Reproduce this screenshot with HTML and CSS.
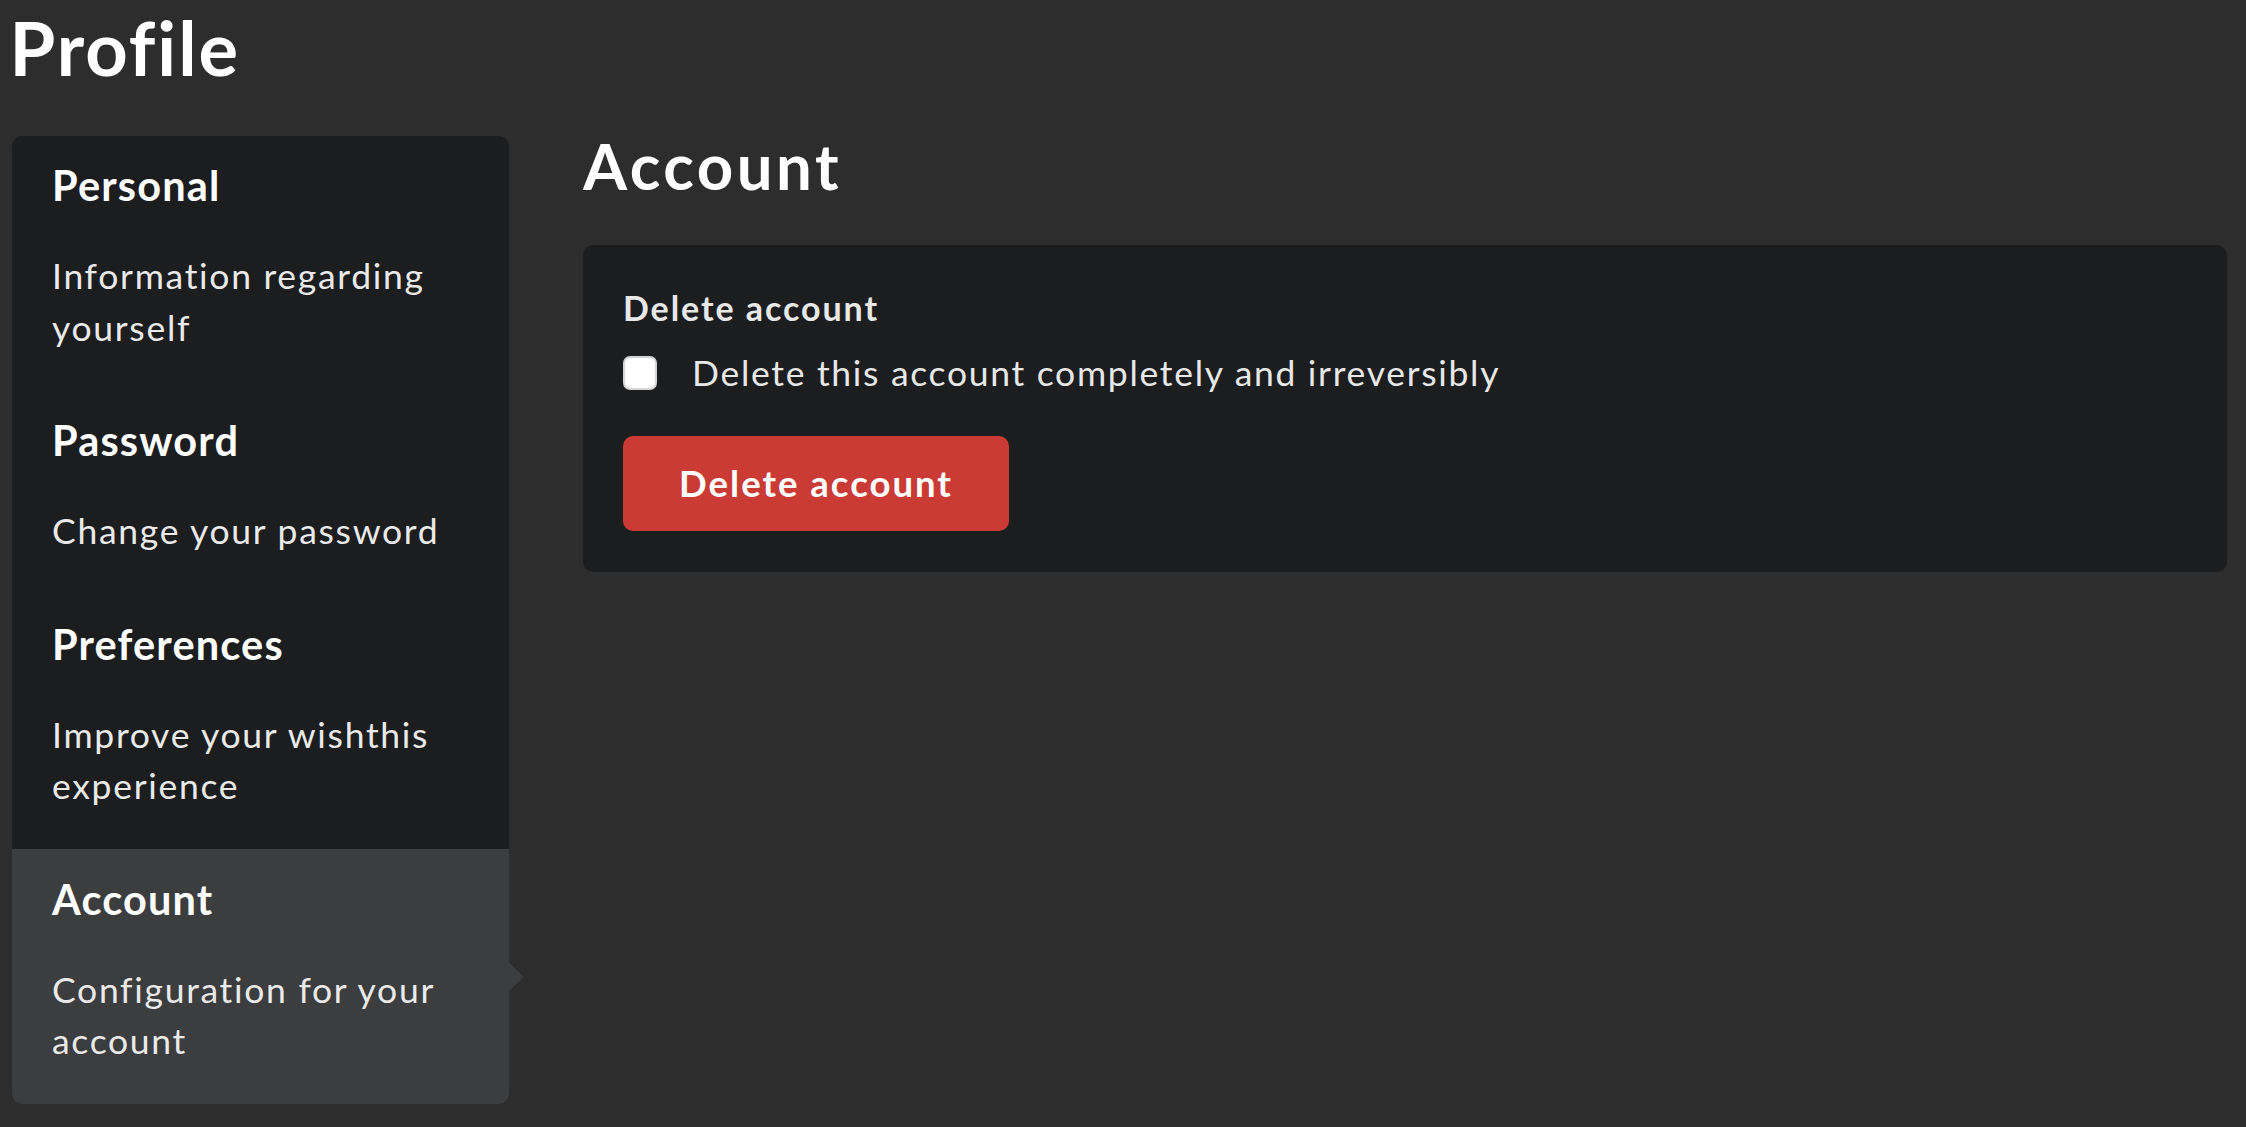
FILE: index.html
```html
<!DOCTYPE html>
<html lang="en">
<head>
<meta charset="utf-8">
<title>Profile</title>
<link rel="stylesheet" href="styles.css">
</head>
<body>
<div class="page">
  <h1 class="page-title">Profile</h1>
  <div class="layout">
    <nav class="steps">
      <a class="step" href="#personal">
        <div class="step-title">Personal</div>
        <div class="step-desc">Information regarding yourself</div>
      </a>
      <a class="step" href="#password">
        <div class="step-title">Password</div>
        <div class="step-desc">Change your password</div>
      </a>
      <a class="step" href="#preferences">
        <div class="step-title">Preferences</div>
        <div class="step-desc">Improve your wishthis experience</div>
      </a>
      <a class="step active" href="#account">
        <div class="step-title">Account</div>
        <div class="step-desc">Configuration for your account</div>
      </a>
    </nav>
    <main class="content">
      <h2 class="section-title">Account</h2>
      <div class="card">
        <div class="field-label">Delete account</div>
        <label class="check-row">
          <span class="checkbox"></span>
          <span class="check-text">Delete this account completely and irreversibly</span>
        </label>
        <button class="btn-danger" type="button">Delete account</button>
      </div>
    </main>
  </div>
</div>
</body>
</html>
```
FILE: styles.css
```css
* { box-sizing: border-box; }
html, body { margin: 0; background: #2d2d2d; }
body { font-family: Lato, "Noto Sans", sans-serif; color: #fff; }

.page { padding: 0 19px 0 11.5px; }
.page-title { margin: 0 0 41px -2px; font-size: 74px; line-height: 95px; font-weight: 700; letter-spacing: 0.027em; }

.layout { display: grid; grid-template-columns: 497px 1fr; column-gap: 74.5px; align-items: start; }

.steps { display: flex; flex-direction: column; background: #1c1d1f; border-radius: 10px; }
.step { position: relative; display: block; padding: 29.2px 40.5px 37.3px; color: inherit; text-decoration: none; }
.step.active { background: #3c3d3f; border-radius: 0 0 10px 10px; }
.step.active::after { content: ""; position: absolute; top: 50%; right: -10px; width: 22px; height: 22px; background: #3c3d3f; transform: translateY(-50%) rotate(45deg); }
.step-title { font-size: 41.5px; line-height: 41.5px; font-weight: 700; letter-spacing: 0.028em; margin-bottom: 43.8px; }
.step-desc { font-size: 35.5px; line-height: 51.6px; letter-spacing: 0.048em; color: #eaeaea; }

.section-title { margin: 0 0 48.6px; font-size: 63.5px; line-height: 60px; font-weight: 700; letter-spacing: 0.055em; }
.card { background: #1c1d1f; border-radius: 10px; padding: 43.8px 40px 41px; }
.field-label { font-size: 34px; line-height: 40px; font-weight: 700; letter-spacing: 0.057em; color: #e8e8e8; margin-bottom: 27.7px; }
.check-row { display: flex; align-items: center; gap: 35px; height: 34px; margin-bottom: 45.5px; }
.checkbox { width: 34px; height: 34px; border-radius: 7px; background: #fff; border: 2px solid #d4d4d5; flex: none; }
.check-text { font-size: 35.5px; line-height: 34px; letter-spacing: 0.048em; color: #e8e8e8; }
.btn-danger { display: flex; align-items: center; justify-content: center; width: 386px; height: 95px; padding: 0; border: none; border-radius: 10px; background: #c93b34; color: #fff; font-family: inherit; font-size: 36.5px; font-weight: 700; letter-spacing: 0.055em; }
```
